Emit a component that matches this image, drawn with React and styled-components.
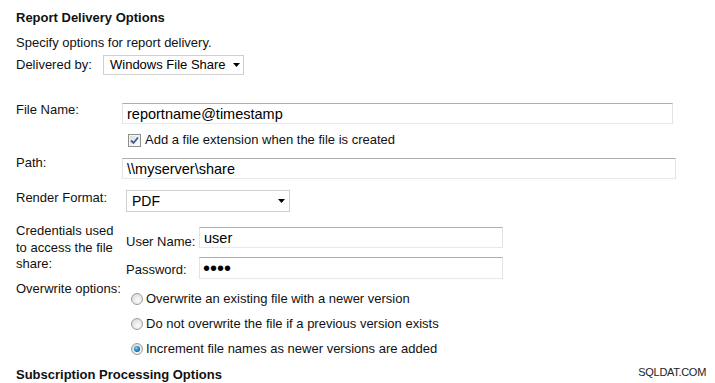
import React from 'react';
import styled, { createGlobalStyle } from 'styled-components';

const Global = createGlobalStyle`
  html, body { margin: 0; padding: 0; background: #fff; }
  body {
    font-family: "Liberation Sans", Arial, sans-serif;
    font-size: 13px;
    color: #111;
  }
`;

const Page = styled.div`
  position: relative;
  width: 715px;
  height: 383px;
  overflow: hidden;
  box-sizing: border-box;
  padding: 10px 0 0 16px;
`;

const Heading = styled.div`
  font-weight: bold;
  line-height: 16px;
  margin-top: ${p => p.$mt || 0}px;
`;

const Text = styled.div`
  line-height: 16px;
  margin-top: ${p => p.$mt || 0}px;
`;

const InlineRow = styled.div`
  display: flex;
  align-items: center;
  margin-top: ${p => p.$mt || 0}px;
`;

const InlineLabel = styled.span`
  width: 87px;
  line-height: 16px;
`;

const Row = styled.div`
  display: grid;
  grid-template-columns: 106px 1fr;
  align-items: start;
  margin-top: ${p => p.$mt || 0}px;
`;

const Label = styled.div`
  width: ${p => (p.$nowrap ? 'auto' : '102px')};
  white-space: ${p => (p.$nowrap ? 'nowrap' : 'normal')};
  line-height: ${p => p.$lh || 16}px;
`;

const Cell = styled.div`
  margin-left: ${p => p.$ml || 0}px;
  margin-top: ${p => p.$mt || 0}px;
`;

const TextBox = styled.input`
  display: block;
  box-sizing: border-box;
  width: ${p => p.$w}px;
  height: ${p => p.$h || 21}px;
  margin: 0;
  padding: 0 4px;
  border: 1px solid;
  border-color: #abadb3 #e2e3ea #e3e9ef #e2e3ea;
  background: #fff;
  font-family: "Liberation Sans", Arial, sans-serif;
  font-size: 14.5px;
  color: #000;
  outline: none;
  &[type="password"] {
    font-size: 20px;
    letter-spacing: 0px;
    padding-left: 3px;
  }
`;

const Select = styled.div`
  box-sizing: border-box;
  display: flex;
  align-items: center;
  justify-content: space-between;
  width: ${p => p.$w}px;
  height: ${p => p.$h}px;
  padding: 0 ${p => p.$pr || 4}px 0 ${p => p.$pl || 6}px;
  border: 1px solid #cfcfcf;
  background: #fff;
  color: #000;
  font-size: ${p => p.$fs || 13}px;
  line-height: 16px;
`;

const Arrow = styled.svg`
  width: 7px;
  height: 4px;
  flex: none;
`;

const CheckRow = styled.label`
  display: flex;
  align-items: center;
  line-height: 16px;
  gap: 4px;
`;

const CheckBox = styled.span`
  box-sizing: border-box;
  width: 13px;
  height: 13px;
  border: 1px solid #8e8f8f;
  background: linear-gradient(135deg, #d8d8d8 0%, #f2f2f2 60%, #ffffff 100%);
  box-shadow: inset 0 0 0 1px #f4f4f4;
  display: flex;
  align-items: center;
  justify-content: center;
  flex: none;
`;

const CredGrid = styled.div`
  display: grid;
  grid-template-columns: 73px 304px;
  row-gap: 7px;
  align-items: start;
`;

const SubLabel = styled.div`
  line-height: 16px;
  margin-top: ${p => p.$mt || 6}px;
`;

const RadioList = styled.div`
  display: flex;
  flex-direction: column;
  gap: 9px;
`;

const RadioRow = styled.label`
  display: flex;
  align-items: center;
  gap: 3px;
  line-height: 16px;
`;

const Radio = styled.span`
  box-sizing: border-box;
  width: 12px;
  height: 12px;
  border-radius: 50%;
  border: 1px solid #9c9c9c;
  background: radial-gradient(circle at 60% 65%, #fbfbfb 0%, #e6e6e6 55%, #cfcfcf 100%);
  display: flex;
  align-items: center;
  justify-content: center;
  flex: none;
  &::after {
    content: "";
    display: ${p => (p.$on ? 'block' : 'none')};
    width: 6px;
    height: 6px;
    border-radius: 50%;
    background: radial-gradient(circle at 40% 35%, #8fd3f5 0%, #2a86c0 45%, #0d3f66 100%);
  }
`;

const Watermark = styled.div`
  position: absolute;
  right: 9px;
  top: 366px;
  font-size: 11px;
  line-height: 13px;
  letter-spacing: -0.3px;
  color: #222;
`;

function DownArrow() {
  return (
    <Arrow viewBox="0 0 7 4">
      <path d="M0 0 H7 L3.5 4 Z" fill="#000" />
    </Arrow>
  );
}

export default function App() {
  return (
    <>
      <Global />
      <Page>
        <Heading>Report Delivery Options</Heading>
        <Text $mt={9}>Specify options for report delivery.</Text>
        <InlineRow $mt={4}>
          <InlineLabel>Delivered by:</InlineLabel>
          <Select $w={141} $h={20} $pr={3}>
            <span>Windows File Share</span>
            <DownArrow />
          </Select>
        </InlineRow>

        <Row $mt={27}>
          <Label>File Name:</Label>
          <Cell $mt={1}>
            <TextBox $w={551} readOnly value="reportname@timestamp" />
          </Cell>
        </Row>

        <Row $mt={8}>
          <div />
          <Cell $ml={6}>
            <CheckRow>
              <CheckBox>
                <svg width="9" height="9" viewBox="0 0 9 9">
                  <path d="M1 4.5 L3.5 7 L8 1.5" stroke="#3c5a96" strokeWidth="1.8" fill="none" />
                </svg>
              </CheckBox>
              <span>Add a file extension when the file is created</span>
            </CheckRow>
          </Cell>
        </Row>

        <Row $mt={7}>
          <Label>Path:</Label>
          <Cell $mt={3}>
            <TextBox $w={554} readOnly value="\\myserver\share" />
          </Cell>
        </Row>

        <Row $mt={11}>
          <Label>Render Format:</Label>
          <Cell $ml={4}>
            <Select $w={164} $h={22} $pl={5} $pr={4} $fs={14}>
              <span>PDF</span>
              <DownArrow />
            </Select>
          </Cell>
        </Row>

        <Row $mt={11}>
          <Label $lh={16.5}>Credentials used to access the file share:</Label>
          <Cell $ml={4} $mt={4}>
            <CredGrid>
              <SubLabel $mt={7}>User Name:</SubLabel>
              <TextBox $w={304} readOnly value="user" />
              <SubLabel $mt={5}>Password:</SubLabel>
              <TextBox $w={304} $h={22} type="password" readOnly value="abcd" />
            </CredGrid>
          </Cell>
        </Row>

        <Row $mt={2}>
          <Label $nowrap>Overwrite options:</Label>
          <Cell $ml={9} $mt={10}>
            <RadioList>
              <RadioRow><Radio />Overwrite an existing file with a newer version</RadioRow>
              <RadioRow><Radio />Do not overwrite the file if a previous version exists</RadioRow>
              <RadioRow><Radio $on />Increment file names as newer versions are added</RadioRow>
            </RadioList>
          </Cell>
        </Row>

        <Heading $mt={10}>Subscription Processing Options</Heading>
        <Watermark>SQLDAT.COM</Watermark>
      </Page>
    </>
  );
}
